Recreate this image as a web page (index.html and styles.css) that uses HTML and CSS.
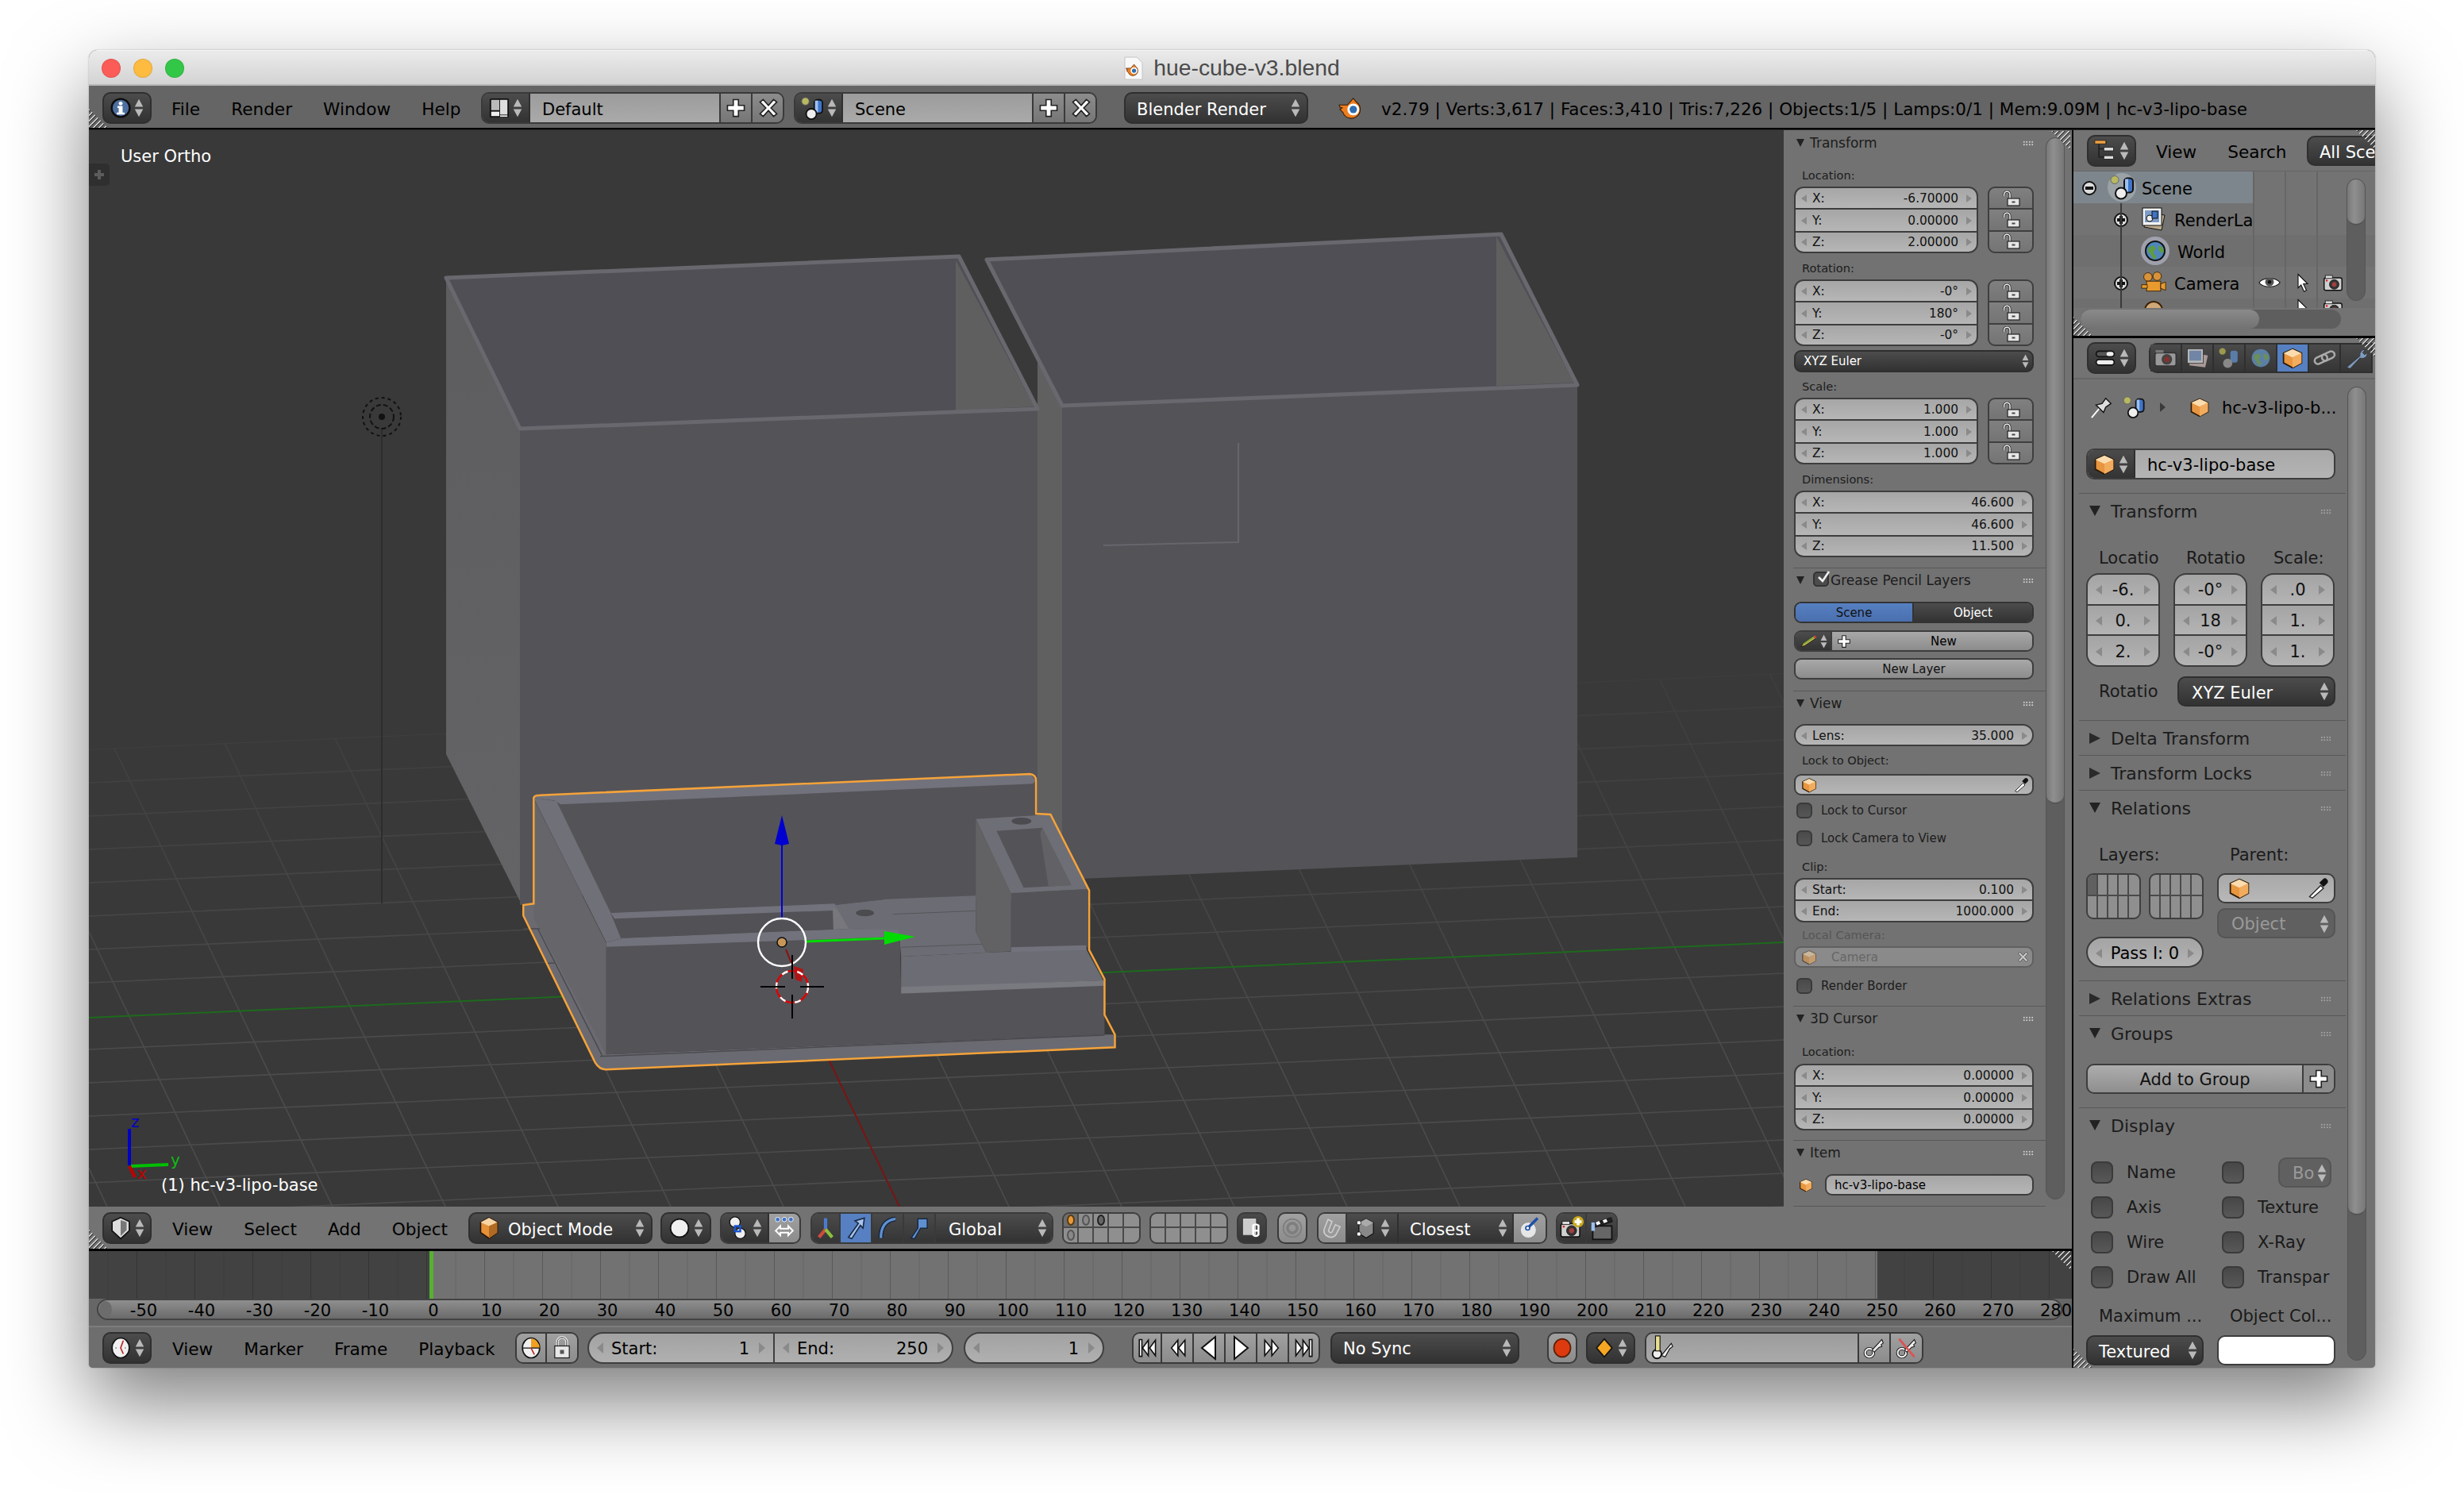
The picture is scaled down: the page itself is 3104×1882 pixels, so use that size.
FILE: index.html
```html
<!DOCTYPE html>
<html lang="en">
<head>
<meta charset="utf-8">
<title>hue-cube-v3.blend</title>
<link rel="stylesheet" href="styles.css">
</head>
<body>
<svg class="defs" width="0" height="0">
  <defs>
    <symbol id="ud" viewBox="0 0 16 32"><path d="M8 1l7 13H1zM8 31l7-13H1z" fill="#b9b9b9"/></symbol>
    <symbol id="info" viewBox="0 0 32 32"><circle cx="16" cy="16" r="14" fill="#4d6f9f" stroke="#0c0c0c" stroke-width="3"/><circle cx="16" cy="9" r="3" fill="#fff"/><path d="M11 13h8v10h3v3H10v-3h3v-7h-2z" fill="#fff"/></symbol>
    <symbol id="layout" viewBox="2 2 28 28"><rect x="3" y="3" width="26" height="26" rx="2" fill="#111"/><rect x="5" y="5" width="11" height="14" fill="#bbb"/><rect x="17" y="5" width="10" height="20" fill="#ddd"/><rect x="5" y="21" width="11" height="6" fill="#eee"/><rect x="17" y="26" width="10" height="2" fill="#eee"/></symbol>
    <symbol id="scene" viewBox="1 0 32 31"><circle cx="8" cy="6" r="5" fill="#b8b860" stroke="#666" stroke-width="1"/><rect x="20" y="4" width="11" height="18" rx="4" fill="#3f74c8" stroke="#111" stroke-width="2"/><rect x="21" y="5" width="4" height="16" fill="#9cc0f0"/><circle cx="16" cy="23" r="7" fill="#eee" stroke="#111" stroke-width="2"/></symbol>
    <symbol id="plus" viewBox="0 0 32 32"><path d="M12 3h8v9h9v8h-9v9h-8v-9H3v-8h9z" fill="#fff" stroke="#222" stroke-width="2"/></symbol>
    <symbol id="cross" viewBox="0 0 32 32"><path d="M8 3l8 9 8-9 5 4-9 9 9 9-5 4-8-9-8 9-5-4 9-9-9-9z" fill="#fff" stroke="#222" stroke-width="2"/></symbol>
    <symbol id="logo" viewBox="0 0 34 30"><path d="M1 11h11L20 2l4 5a12 12 0 1 1-18 14l-4-4 3-2-3-1z" fill="#ed7d1e" stroke="#3b1d05" stroke-width="1.2"/><circle cx="20" cy="17" r="8" fill="#fff"/><circle cx="20" cy="17" r="5" fill="#2f6db0"/></symbol>
    <symbol id="cube" viewBox="0 0 32 32"><path d="M16 3l13 6v14l-13 7-13-7V9z" fill="#e8963f" stroke="#2a1a08" stroke-width="2"/><path d="M16 3l13 6-13 6L3 9z" fill="#fbdcae"/><path d="M16 15l13-6v14l-13 7z" fill="#f2ac5e"/></symbol>
    <symbol id="lock" viewBox="0 0 22 20"><path d="M9 10V5a3.700 3.700 0 0 0-7.400 0V7.500" fill="none" stroke="#222" stroke-width="3"/><path d="M9 10V5a3.700 3.700 0 0 0-7.400 0V7.500" fill="none" stroke="#f4f4f4" stroke-width="1.500"/><rect x="6" y="10" width="15" height="9" fill="#e6e6e6" stroke="#222" stroke-width="1.200"/><rect x="11.500" y="13.500" width="4" height="2" fill="#444"/></symbol>
    <symbol id="dropper" viewBox="0 0 32 32"><path d="M4 28l16-16 4 4L8 30z" fill="#fff" stroke="#222" stroke-width="1.5"/><path d="M18 8l6 6 5-5a4 4 0 0 0-6-6z" fill="#111"/></symbol>
    <symbol id="pencil" viewBox="0 0 48 32"><path d="M4 29l5-8 26-18 5 6-27 18z" fill="#c6b04a" stroke="#111" stroke-width="1.5"/><path d="M9 21l26-18 3 3-27 18z" fill="#79a83c"/><path d="M35 3l5 6 3-3-4-5z" fill="#d7423a"/></symbol>
    <symbol id="axes" viewBox="0 0 32 36"><path d="M16 20V3" stroke="#4b7bd0" stroke-width="5"/><path d="M16 20L6 32" stroke="#d14b3e" stroke-width="5"/><path d="M16 20l10 12" stroke="#8bc23c" stroke-width="5"/></symbol>
    <symbol id="arrowup" viewBox="0 0 32 36"><path d="M5 32L20 11l-5-4 14-4-2 15-4-4L10 34z" fill="#a6c6f0" stroke="#1a2a44" stroke-width="2"/></symbol>
    <symbol id="curve" viewBox="0 0 32 36"><path d="M6 33C6 15 14 6 28 4" fill="none" stroke="#12223c" stroke-width="7"/><path d="M6 33C6 15 14 6 28 4" fill="none" stroke="#5f8fd0" stroke-width="4"/></symbol>
    <symbol id="scale" viewBox="0 0 32 36"><path d="M4 33l10-15V4h14v14H18L9 34z" fill="#5f8fd0" stroke="#12223c" stroke-width="1.5"/></symbol>
    <symbol id="shield" viewBox="0 0 32 36"><path d="M16 2l13 6v14l-13 12-13-12V8z" fill="#ddd" stroke="#111" stroke-width="2"/><path d="M16 6l9 3v12l-9 9z" fill="#777"/></symbol>
    <symbol id="modecube" viewBox="0 0 32 36"><path d="M16 2l13 7v16l-13 9-13-9V9z" fill="#e69038" stroke="#241505" stroke-width="2"/><path d="M16 2l13 7-13 6L3 9z" fill="#f7d5a4"/><path d="M16 15l13-6v16l-13 9z" fill="#b06a24"/></symbol>
    <symbol id="ball" viewBox="0 0 32 32"><circle cx="16" cy="16" r="13" fill="#efefef" stroke="#111" stroke-width="2"/></symbol>
    <symbol id="pivot" viewBox="0 0 32 36"><circle cx="11" cy="9" r="8" fill="#eee" stroke="#111" stroke-width="1.5"/><circle cx="19" cy="26" r="8" fill="#eee" stroke="#111" stroke-width="1.5"/><rect x="11" y="15" width="8" height="8" fill="none" stroke="#1a55d0" stroke-width="3"/></symbol>
    <symbol id="manip" viewBox="0 0 32 36"><circle cx="6" cy="5" r="3.5" fill="#3f74c8" stroke="#fff"/><circle cx="16" cy="5" r="3.5" fill="#3f74c8" stroke="#fff"/><circle cx="26" cy="5" r="3.5" fill="#3f74c8" stroke="#fff"/><path d="M3 22l7-7v4h12v-4l7 7-7 7v-4H10v4z" fill="none" stroke="#fff" stroke-width="2.4"/></symbol>
    <symbol id="link" viewBox="0 0 32 36"><rect x="2" y="3" width="21" height="26" fill="#ccc" stroke="#333"/><path d="M18 14a6 6 0 0 1 8 0v8h-8zM18 22h8v6a5 5 0 0 1-8 0z" fill="none" stroke="#fff" stroke-width="3"/></symbol>
    <symbol id="prop" viewBox="0 0 32 32"><circle cx="16" cy="16" r="13" fill="none" stroke="#7e7e7e" stroke-width="2"/><circle cx="16" cy="16" r="7" fill="none" stroke="#7e7e7e" stroke-width="4"/></symbol>
    <symbol id="magnet" viewBox="0 0 32 36"><path d="M10 5L4 20c-2 10 12 16 18 8l6-12-7-3-5 11c-2 2-6 0-5-3l5-13z" fill="#999" stroke="#ccc" stroke-width="2"/></symbol>
    <symbol id="snapcube" viewBox="0 0 32 36"><path d="M16 4l11 6v16l-11 7-11-7V10z" fill="#888" stroke="#111" stroke-width="1.5"/><path d="M16 4l11 6-11 6-11-6z" fill="#aaa"/><rect x="2" y="7" width="6" height="6" rx="2" fill="#fff" stroke="#111"/><rect x="2" y="24" width="6" height="6" rx="2" fill="#fff" stroke="#111"/></symbol>
    <symbol id="snapball" viewBox="0 0 32 36"><circle cx="14" cy="21" r="12" fill="#e6e6e6" stroke="#888"/><path d="M13 18L28 3" stroke="#1b4ea8" stroke-width="4"/><circle cx="13" cy="18" r="3" fill="#fff" stroke="#1b4ea8" stroke-width="2"/></symbol>
    <symbol id="camera" viewBox="0 0 36 32"><rect x="3" y="8" width="30" height="21" rx="3" fill="#cfcfcf" stroke="#111" stroke-width="2"/><rect x="5" y="4" width="12" height="5" fill="#ddd" stroke="#111"/><circle cx="20" cy="19" r="8" fill="#333" stroke="#111"/><circle cx="20" cy="19" r="4" fill="#a04040"/><rect x="6" y="11" width="3" height="3" fill="#d22"/></symbol>
    <symbol id="camadd" viewBox="0 0 36 36"><use href="#camera" y="4" width="32" height="30"/><circle cx="27" cy="9" r="8" fill="#c9a818"/><path d="M25 4h4v3h3v4h-3v3h-4v-3h-3V7h3z" fill="#fff"/></symbol>
    <symbol id="clap" viewBox="0 0 36 36"><rect x="5" y="15" width="27" height="19" fill="#666" stroke="#111" stroke-width="2"/><path d="M3 12l28-9 2 6-28 9z" fill="#222" stroke="#111"/><path d="M9 10l5-2 2 4-5 2zM19 7l5-2 2 4-5 2z" fill="#fff"/><rect x="3" y="10" width="5" height="12" fill="#9cc0f0"/></symbol>
    <symbol id="clock" viewBox="0 0 32 36"><ellipse cx="16" cy="18" rx="13" ry="15" fill="#f0f0f0" stroke="#111" stroke-width="2"/><path d="M20 7l-4 11 4 9" stroke="#b22" stroke-width="2" fill="none"/><path d="M8 18h2M22 18h2" stroke="#333"/></symbol>
    <symbol id="clockor" viewBox="0 0 32 36"><ellipse cx="16" cy="18" rx="13" ry="15" fill="#f0f0f0" stroke="#111" stroke-width="2"/><path d="M16 18V4a13 15 0 0 1 13 14z" fill="#f0a020"/><path d="M3 18h26" stroke="#111" stroke-width="1.5"/><path d="M16 18l5 10" stroke="#b22" stroke-width="2"/></symbol>
    <symbol id="padlock" viewBox="0 0 32 36"><path d="M9 15V9a7 7 0 0 1 14 0v6" fill="none" stroke="#eee" stroke-width="4"/><path d="M9 15V9a7 7 0 0 1 14 0v6" fill="none" stroke="#222" stroke-width="1"/><rect x="5" y="15" width="22" height="18" fill="#e8e8e8" stroke="#222" stroke-width="1.5"/><rect x="13" y="21" width="6" height="6" fill="#555"/></symbol>
    <symbol id="first" viewBox="0 0 30 32"><path d="M3 3h4v26H3zM17 4v24L8 16zM28 4v24L19 16z" fill="#fff" stroke="#111" stroke-width="2"/></symbol>
    <symbol id="prev" viewBox="0 0 30 32"><path d="M16 4v24L6 16zM27 4v24L17 16z" fill="#fff" stroke="#111" stroke-width="2"/></symbol>
    <symbol id="back" viewBox="0 0 30 32"><path d="M23 2v28L6 16z" fill="#fff" stroke="#111" stroke-width="2"/></symbol>
    <symbol id="play" viewBox="0 0 30 32"><path d="M7 2v28l17-14z" fill="#fff" stroke="#111" stroke-width="2"/></symbol>
    <symbol id="next" viewBox="0 0 30 32"><path d="M3 4v24l10-12zM14 4v24l10-12z" fill="#fff" stroke="#111" stroke-width="2"/></symbol>
    <symbol id="last" viewBox="0 0 30 32"><path d="M2 4v24l9-12zM13 4v24l9-12zM23 3h4v26h-4z" fill="#fff" stroke="#111" stroke-width="2"/></symbol>
    <symbol id="rec" viewBox="0 0 32 32"><ellipse cx="16" cy="16" rx="12" ry="13" fill="#dd3a10" stroke="#5a2008" stroke-width="2"/></symbol>
    <symbol id="diamond" viewBox="0 0 32 32"><path d="M16 2l12 14-12 14L4 16z" fill="#f5a623" stroke="#111" stroke-width="2"/></symbol>
    <symbol id="key" viewBox="0 0 32 32"><circle cx="9" cy="23" r="6" fill="none" stroke="#111" stroke-width="4.5"/><circle cx="9" cy="23" r="6" fill="none" stroke="#eee" stroke-width="2.4"/><path d="M13 19L27 4l2 5-3 2 1 3-4 1-7 7z" fill="#eee" stroke="#111" stroke-width="1.2"/></symbol>
    <symbol id="keyy" viewBox="0 0 32 36"><circle cx="9" cy="26" r="6" fill="#eee" stroke="#111" stroke-width="2"/><rect x="7" y="2" width="6" height="20" fill="#e8df90" stroke="#111" stroke-width="1.2"/><path d="M15 28L28 12l2 4-4 3-6 11z" fill="#eee" stroke="#111" stroke-width="1.2"/></symbol>
    <symbol id="keyx" viewBox="0 0 32 32"><use href="#key" width="32" height="32"/><path d="M5 3l22 26" stroke="#e05050" stroke-width="3"/></symbol>
    <symbol id="tree" viewBox="0 0 32 32"><path d="M4 4h14M7 5v20M7 13h8M7 25h8" stroke="#222" stroke-width="2"/><rect x="1" y="1" width="16" height="5" fill="#f0a040" stroke="#222"/><rect x="14" y="11" width="14" height="5" fill="#ddd" stroke="#222"/><rect x="14" y="23" width="14" height="5" fill="#ddd" stroke="#222"/></symbol>
    <symbol id="propsel" viewBox="0 0 32 32"><rect x="3" y="6" width="26" height="8" rx="4" fill="#555" stroke="#111" stroke-width="2"/><rect x="18" y="7" width="10" height="6" rx="3" fill="#eee"/><rect x="3" y="18" width="26" height="8" rx="4" fill="#eee" stroke="#111" stroke-width="2"/></symbol>
    <symbol id="renderl" viewBox="0 0 32 32"><path d="M8 8l22 3-4 19-22-4z" fill="#b9a98a" stroke="#111"/><rect x="2" y="2" width="24" height="22" fill="#f2f2f2" stroke="#111"/><rect x="5" y="5" width="18" height="15" fill="#7e9cc8"/><circle cx="11" cy="15" r="4" fill="#eee" stroke="#111"/><rect x="14" y="6" width="7" height="9" fill="#3f74c8" stroke="#111"/></symbol>
    <symbol id="world" viewBox="0 0 32 32"><circle cx="16" cy="16" r="12" fill="#4f86bd" stroke="#111" stroke-width="2"/><path d="M7 12l7-3 3 4-3 5 4 6-4 3-4-7-3-3zM20 9l6 3 1 5-4 2-3-4z" fill="#5f9a48"/></symbol>
    <symbol id="camobj" viewBox="0 0 36 32"><circle cx="10" cy="8" r="6" fill="#d8923a" stroke="#3a2205"/><circle cx="23" cy="7" r="6" fill="#d8923a" stroke="#3a2205"/><rect x="8" y="14" width="20" height="14" fill="#e89a2e" stroke="#3a2205"/><path d="M28 18l7-3v12l-7-3zM1 19h8v5H1z" fill="#e89a2e" stroke="#3a2205"/></symbol>
    <symbol id="lamp" viewBox="0 0 32 32"><circle cx="16" cy="14" r="11" fill="#cfa878" stroke="#3a2205" stroke-width="2"/></symbol>
    <symbol id="eye" viewBox="0 0 36 20"><path d="M1 10C8 1 28 1 35 10 28 19 8 19 1 10z" fill="#fff" stroke="#111" stroke-width="1.5"/><circle cx="18" cy="9" r="7" fill="#555"/><circle cx="18" cy="9" r="3" fill="#111"/></symbol>
    <symbol id="ptr" viewBox="0 0 20 32"><path d="M2 2l16 16h-7l5 11-4 2-5-11-5 5z" fill="#fff" stroke="#111" stroke-width="1.5"/></symbol>
    <symbol id="pin" viewBox="0 0 32 32"><path d="M2 30l11-13" stroke="#fff" stroke-width="2"/><path d="M8 13l10 10 3-7 7-5-7-7-5 7z" fill="#ddd" stroke="#111" stroke-width="1.5"/></symbol>
    <symbol id="tcam" viewBox="0 0 36 32"><rect x="2" y="8" width="32" height="20" rx="3" fill="#999" stroke="#333" stroke-width="2"/><circle cx="20" cy="18" r="8" fill="#444"/><circle cx="20" cy="18" r="4" fill="#863030"/><rect x="3" y="4" width="12" height="4" fill="#777"/></symbol>
    <symbol id="tlink" viewBox="0 0 36 32"><rect x="3" y="13" width="20" height="10" rx="5" transform="rotate(-25 13 18)" fill="none" stroke="#aaa" stroke-width="3"/><rect x="14" y="8" width="20" height="10" rx="5" transform="rotate(-25 24 13)" fill="none" stroke="#aaa" stroke-width="3"/></symbol>
    <symbol id="twrench" viewBox="0 0 36 32"><path d="M4 30L24 13a8 8 0 0 1 8-10l-4 5 3 3 4-3a8 8 0 0 1-11 8L9 32z" fill="#7e9cc0" stroke="#333"/></symbol>
    <symbol id="tdim" viewBox="0 0 36 32"><path d="M8 8l26 4-4 18-24-3z" fill="#a99"/><rect x="3" y="2" width="24" height="22" fill="#b8b8b8" stroke="#333"/><rect x="6" y="5" width="18" height="15" fill="#7186a6"/></symbol>
    <symbol id="tscene" viewBox="0 0 36 32"><circle cx="8" cy="6" r="5" fill="#9a9a50"/><rect x="20" y="5" width="11" height="18" rx="4" fill="#5a7ca8"/><circle cx="16" cy="24" r="7" fill="#888"/></symbol>
    <symbol id="tworld" viewBox="0 0 32 32"><circle cx="16" cy="16" r="13" fill="#5b7fa4"/><path d="M6 12l7-3 3 4-3 5 4 6-4 3-4-7-3-3zM20 9l6 3 1 5-4 2-3-4z" fill="#6b8f5a"/></symbol>
  </defs>
</svg>

<div class="window">
  <header class="titlebar">
    <span class="lights"><i class="l red"></i><i class="l yellow"></i><i class="l green"></i></span>
    <svg class="docicon" viewBox="0 0 24 30"><path d="M1 1h15l7 7v21H1z" fill="#f8f8f8" stroke="#c4c4c4"/><use href="#logo" x="2" y="9" width="18" height="16"/></svg>
    <span class="title">hue-cube-v3.blend</span>
  </header>

  <div class="bar topbar">
    <i class="hatch hatch-bl"></i>
    <button class="dk sel60 first-btn"><svg class="i26"><use href="#info"/></svg><svg class="ud"><use href="#ud"/></svg></button>
    <nav class="menu menu-top"><span>File</span><span>Render</span><span>Window</span><span>Help</span></nav>
    <div class="joined w382">
      <span class="dk sel60 seg"><svg class="i26"><use href="#layout"/></svg><svg class="ud"><use href="#ud"/></svg></span>
      <span class="fld f240">Default</span>
      <span class="ico w40"><svg class="i26"><use href="#plus"/></svg></span>
      <span class="ico w40"><svg class="i26"><use href="#cross"/></svg></span>
    </div>
    <div class="joined w382 ml12">
      <span class="dk sel60 seg"><svg class="i30s"><use href="#scene"/></svg><svg class="ud"><use href="#ud"/></svg></span>
      <span class="fld f240">Scene</span>
      <span class="ico w40"><svg class="i26"><use href="#plus"/></svg></span>
      <span class="ico w40"><svg class="i26"><use href="#cross"/></svg></span>
    </div>
    <button class="dk drop w232 ml34"><span class="tx">Blender Render</span><svg class="ud"><use href="#ud"/></svg></button>
    <svg class="logo"><use href="#logo"/></svg>
    <span class="stats">v2.79 | Verts:3,617 | Faces:3,410 | Tris:7,226 | Objects:1/5 | Lamps:0/1 | Mem:9.09M | hc-v3-lipo-base</span>
  </div>
  <div class="rule"></div>

  <div class="main">
    <div class="leftcol">
      <div class="top3d">
        <section class="viewport">
          <svg class="scene" viewBox="112 164 2135 1356" preserveAspectRatio="none">
            <defs>
              <clipPath id="floor"><path d="M112 944L2248 848V1520H112z"/></clipPath>
              <linearGradient id="side" x1="0" x2="0" y1="0" y2="1"><stop offset="0" stop-color="#5d5d5f"/><stop offset="1" stop-color="#646466"/></linearGradient>
              <linearGradient id="gridfade" gradientUnits="userSpaceOnUse" x1="0" x2="0" y1="880" y2="1320"><stop offset="0" stop-color="#3e3e3e"/><stop offset="1" stop-color="#4b4b4b"/></linearGradient>
            </defs>
            <g clip-path="url(#floor)" stroke="url(#gridfade)" stroke-width="1.6" fill="none">
              <path d="M-322 560L135 1520M-180 560L277 1520M-38 560L419 1520M104 560L561 1520M246 560L703 1520M388 560L845 1520M530 560L987 1520M814 560L1271 1520M956 560L1413 1520M1098 560L1555 1520M1240 560L1697 1520M1382 560L1839 1520M1524 560L1981 1520M1666 560L2123 1520M1808 560L2265 1520M1950 560L2407 1520M2092 560L2549 1520"/>
              <path d="M112 944L2248 848M112 986L2248 890M112 1028L2248 932M112 1070L2248 974M112 1112L2248 1016M112 1154L2248 1058M112 1196L2248 1100M112 1238L2248 1142M112 1322L2248 1226M112 1364L2248 1268M112 1406L2248 1310M112 1448L2248 1352M112 1490L2248 1394M112 1532L2248 1436M112 1574L2248 1478M112 1616L2248 1520"/>
              <path d="M112 1282L2248 1187" stroke="#1d6a1d" stroke-width="2"/>
              <path d="M1036 1318L1133 1520" stroke="#7a1414" stroke-width="2"/>
            </g>
            <path d="M481 540V1138" stroke="#2d2d2d" stroke-width="2"/>
            <circle cx="481" cy="525" r="24" fill="none" stroke="#111" stroke-width="2" stroke-dasharray="4 4"/>
            <circle cx="481" cy="525" r="15" fill="none" stroke="#111" stroke-width="2" stroke-dasharray="6 3"/>
            <circle cx="481" cy="525" r="4" fill="#111"/>

            <!-- right cube -->
            <path d="M1243 327L1338 511V1110L1307 1040V400z" fill="#606061"/>
            <path d="M1338 511L1987 485V1080L1338 1108z" fill="#545358"/>
            <path d="M1243 327L1891 295L1987 485L1338 511z" fill="#504f55"/>
            <path d="M1885 298L1983 482L1885 486z" fill="#5f5f60"/>
            <path d="M1243 327L1891 295L1987 485L1338 511z" fill="none" stroke="#68686e" stroke-width="5" stroke-linejoin="round"/>
            <path d="M1560 558V683L1390 687" fill="none" stroke="#66666c" stroke-width="2"/>

            <!-- left cube -->
            <path d="M562 350L655 540V1135L562 950z" fill="url(#side)"/>
            <path d="M655 540L1307 515V1040L655 1140z" fill="#545358"/>
            <path d="M562 350L1208 323L1307 515L655 540z" fill="#504f55"/>
            <path d="M1204 328L1303 512L1204 517z" fill="#5f5f60"/>
            <path d="M562 350L1208 323L1307 515L655 540z" fill="none" stroke="#68686e" stroke-width="5" stroke-linejoin="round"/>

            <!-- base object, coordinates taken from a 1.912 x 3 crop of the scene -->
            <g transform="translate(620 950) scale(.523 .3333)">
              <path d="M75 570L100 565L275 1135L1475 1060L1500 1060V1108L260 1192L248 1165L75 610z" fill="#6a6a70"/>
              <path d="M248 1165L260 1145L1500 1075V1108L260 1192z" fill="#6a6a72"/>
              <path d="M100 165L165 190L1310 100V560L950 548L825 570L285 600z" fill="#545358"/>
              <path d="M100 170L275 715V1135L100 620z" fill="#66666a"/>
              <path d="M100 165L115 155L1295 75L1310 100L1302 112L165 190L150 175z" fill="#72727c"/>
              <path d="M100 165L155 178L315 695L275 712z" fill="#707078"/>
              <path d="M285 600L825 565L860 660L310 695z" fill="#525156"/>
              <path d="M285 600L825 565L835 590L295 622z" fill="#72727c"/>
              <path d="M820 580L835 590L860 660L822 663z" fill="#77777c"/>
              <path d="M825 570L950 548L985 670L860 660z" fill="#6c6c74"/>
              <ellipse cx="898" cy="600" rx="22" ry="13" fill="#4b4b50"/>
              <path d="M945 548L1165 535V670L1190 750L985 765L980 670z" fill="#6c6c74"/>
              <path d="M965 605L1165 592M985 730L1180 718" stroke="#55555a" stroke-width="1" vector-effect="non-scaling-stroke"/>
              <path d="M275 712L315 695L860 660L980 665L982 692L275 732z" fill="#72727c"/>
              <path d="M275 728L982 690L985 905L1475 862V1060L275 1135z" fill="#545358"/>
              <path d="M985 765L1190 750L1430 735L1472 855L985 885z" fill="#6c6c74"/>
              <path d="M985 880L1472 855L1475 875L985 905z" fill="#797980"/>
              <path d="M1250 525L1435 510V730L1250 745z" fill="#545358"/>
              <path d="M1250 730L1430 722L1432 740L1250 748z" fill="#72727c"/>
              <path d="M1165 250L1250 520V745L1190 750L1165 670z" fill="#626264"/>
              <path d="M1165 245L1345 228L1435 510L1250 525z" fill="#6e6e76"/>
              <path d="M1215 290L1325 278L1395 495L1280 505z" fill="#545358"/>
              <path d="M1325 278L1395 495L1340 500L1320 300z" fill="#626266"/>
              <ellipse cx="1275" cy="253" rx="24" ry="13" fill="#4b4b50"/>
              <path d="M260 1142L1475 1062M110 660L265 1140M130 790L150 790M75 660L115 660" fill="none" stroke="#4a4a50" stroke-width="1.5" vector-effect="non-scaling-stroke"/>
              <path vector-effect="non-scaling-stroke" d="M100 165Q102 155 115 155L1295 75Q1310 78 1310 100V225L1345 228L1438 515V740L1475 850V985L1500 1060V1108L275 1192Q258 1192 248 1165L75 610V570L100 565z" fill="none" stroke="#f5a33a" stroke-width="2.5"/>
            </g>

            <!-- gizmo -->
            <path d="M985 1157V1064" stroke="#0000dc" stroke-width="2"/>
            <path d="M985 1027L994 1063L985 1065L976 1063z" fill="#0000d0"/>
            <path d="M1016 1186L1114 1182" stroke="#00dc00" stroke-width="3"/>
            <path d="M1114 1173L1153 1180L1114 1190z" fill="#00dc00"/>
            <circle cx="985" cy="1187" r="30" fill="none" stroke="#fff" stroke-width="2.4"/>
            <circle cx="985" cy="1187" r="6" fill="#c8965a" stroke="#111" stroke-width="1.5"/>
            <path d="M990 1196L997 1213" stroke="#8a1414" stroke-width="2"/>
            <path d="M1000 1217L1012 1221L1010 1237L1002 1234z" fill="#b01515"/>
            <circle cx="998" cy="1243" r="20" fill="none" stroke="#e00000" stroke-width="2.4"/>
            <circle cx="998" cy="1243" r="20" fill="none" stroke="#fff" stroke-width="2.4" stroke-dasharray="8 12"/>
            <path d="M958 1243H989M1008 1243H1038M998 1203V1233M998 1253V1283" stroke="#000" stroke-width="2"/>

            <!-- mini axes -->
            <path d="M163 1422V1468" stroke="#0000c8" stroke-width="4"/>
            <path d="M165 1469L212 1467" stroke="#00c000" stroke-width="4"/>
            <path d="M163 1469L170 1483" stroke="#c00000" stroke-width="4"/>
          </svg>
          <span class="vp-tab"><b></b></span>
          <span class="vp-text vp-name">User Ortho</span>
          <span class="vp-axis ax-z">z</span>
          <span class="vp-axis ax-y">y</span>
          <span class="vp-axis ax-x">x</span>
          <span class="vp-text vp-obj">(1) hc-v3-lipo-base</span>
        </section>

        <aside class="npanel">
          <i class="hatch hatch-tr"></i>
          <div class="scroll scroll-n"><b></b></div>

          <div class="np-head m1"><i class="tri"></i>Transform<em class="dots"></em></div>
          <div class="lab mt12">Location:</div>
          <div class="fl-row">
            <div class="grp">
              <div class="num"><span>X:</span><span>-6.70000</span></div>
              <div class="num"><span>Y:</span><span>0.00000</span></div>
              <div class="num"><span>Z:</span><span>2.00000</span></div>
            </div>
            <div class="locks"><span><svg><use href="#lock"/></svg></span><span><svg><use href="#lock"/></svg></span><span><svg><use href="#lock"/></svg></span></div>
          </div>
          <div class="lab mt5">Rotation:</div>
          <div class="fl-row">
            <div class="grp">
              <div class="num"><span>X:</span><span>-0°</span></div>
              <div class="num"><span>Y:</span><span>180°</span></div>
              <div class="num"><span>Z:</span><span>-0°</span></div>
            </div>
            <div class="locks"><span><svg><use href="#lock"/></svg></span><span><svg><use href="#lock"/></svg></span><span><svg><use href="#lock"/></svg></span></div>
          </div>
          <button class="dk drop-s mt5">XYZ Euler<svg class="ud-s"><use href="#ud"/></svg></button>
          <div class="lab mt4">Scale:</div>
          <div class="fl-row">
            <div class="grp">
              <div class="num"><span>X:</span><span>1.000</span></div>
              <div class="num"><span>Y:</span><span>1.000</span></div>
              <div class="num"><span>Z:</span><span>1.000</span></div>
            </div>
            <div class="locks"><span><svg><use href="#lock"/></svg></span><span><svg><use href="#lock"/></svg></span><span><svg><use href="#lock"/></svg></span></div>
          </div>
          <div class="lab mt5">Dimensions:</div>
          <div class="grp wide">
            <div class="num"><span>X:</span><span>46.600</span></div>
            <div class="num"><span>Y:</span><span>46.600</span></div>
            <div class="num"><span>Z:</span><span>11.500</span></div>
          </div>

          <div class="np-sep sep-13"></div>
          <div class="np-head"><i class="tri"></i><i class="chk"><svg viewBox="0 0 20 20"><path d="M4 9l5 5 8-12" fill="none" stroke="#eee" stroke-width="2.6"/></svg></i>Grease Pencil Layers<em class="dots"></em></div>
          <div class="tabs2 mt12"><span class="on">Scene</span><span>Object</span></div>
          <div class="newrow mt9"><span class="dk pen"><svg class="i-pen"><use href="#pencil"/></svg><svg class="ud-s"><use href="#ud"/></svg></span><span class="newbtn"><svg class="i-plus"><use href="#plus"/></svg><b>New</b></span></div>
          <div class="btn mt8">New Layer</div>

          <div class="np-sep sep-14"></div>
          <div class="np-head"><i class="tri"></i>View<em class="dots"></em></div>
          <div class="grp wide one mt11"><div class="num"><span>Lens:</span><span>35.000</span></div></div>
          <div class="lab mt4">Lock to Object:</div>
          <div class="objf mt3"><svg class="i-cube"><use href="#cube"/></svg><svg class="i-drop"><use href="#dropper"/></svg></div>
          <div class="chkrow mt5"><i class="box"></i>Lock to Cursor</div>
          <div class="chkrow mt7"><i class="box"></i>Lock Camera to View</div>
          <div class="lab mt8">Clip:</div>
          <div class="grp wide two">
            <div class="num"><span>Start:</span><span>0.100</span></div>
            <div class="num"><span>End:</span><span>1000.000</span></div>
          </div>
          <div class="lab dim mt2">Local Camera:</div>
          <div class="objf off"><svg class="i-cube"><use href="#cube"/></svg><span>Camera</span><svg class="i-x"><use href="#cross"/></svg></div>
          <div class="chkrow mt9"><i class="box"></i>Render Border</div>

          <div class="np-sep sep-11"></div>
          <div class="np-head"><i class="tri"></i>3D Cursor<em class="dots"></em></div>
          <div class="lab mt13">Location:</div>
          <div class="grp wide mt1">
            <div class="num"><span>X:</span><span>0.00000</span></div>
            <div class="num"><span>Y:</span><span>0.00000</span></div>
            <div class="num"><span>Z:</span><span>0.00000</span></div>
          </div>

          <div class="np-sep sep-12"></div>
          <div class="np-head"><i class="tri"></i>Item<em class="dots"></em></div>
          <div class="itemrow mt12"><svg class="i-cube"><use href="#cube"/></svg><span class="itemf">hc-v3-lipo-base</span></div>
          <div class="np-sep sep-13"></div>
        </aside>
      </div>

      <div class="bar header3d">
        <i class="hatch hatch-bl"></i>
        <button class="dk sel60 first-btn"><svg class="i28"><use href="#shield"/></svg><svg class="ud"><use href="#ud"/></svg></button>
        <nav class="menu menu-3d"><span>View</span><span>Select</span><span>Add</span><span>Object</span></nav>
        <button class="dk drop w232"><svg class="i-mode"><use href="#modecube"/></svg><span class="grow tx">Object Mode</span><svg class="ud"><use href="#ud"/></svg></button>
        <button class="dk sel60 w64 ml10"><svg class="i28"><use href="#ball"/></svg><svg class="ud"><use href="#ud"/></svg></button>
        <div class="joined ml11">
          <span class="dk sel60 seg"><svg class="i28"><use href="#pivot"/></svg><svg class="ud"><use href="#ud"/></svg></span>
          <span class="ico lt w38"><svg class="i28"><use href="#manip"/></svg></span>
        </div>
        <div class="joined ml12">
          <span class="ico dkk w36"><svg class="i28"><use href="#axes"/></svg></span>
          <span class="ico blue w40"><svg class="i28"><use href="#arrowup"/></svg></span>
          <span class="ico dkk w40"><svg class="i28"><use href="#curve"/></svg></span>
          <span class="ico dkk w40"><svg class="i28"><use href="#scale"/></svg></span>
          <span class="dk sel-gl"><span class="tx">Global</span><svg class="ud"><use href="#ud"/></svg></span>
        </div>
        <div class="layers wl ml11"><i class="a"><u class="o"></u></i><i><u></u></i><i><u class="k"></u></i><i></i><i></i><i><u></u></i><i></i><i></i><i></i><i></i></div>
        <div class="layers wl ml11"><i></i><i></i><i></i><i></i><i></i><i></i><i></i><i></i><i></i><i></i></div>
        <button class="ico dkk single ml11"><svg class="i28"><use href="#link"/></svg></button>
        <button class="ico lt single ml13"><svg class="i28"><use href="#prop"/></svg></button>
        <div class="joined ml12">
          <span class="ico lt w36"><svg class="i28"><use href="#magnet"/></svg></span>
          <span class="dk sel60 seg w65"><svg class="i28"><use href="#snapcube"/></svg><svg class="ud"><use href="#ud"/></svg></span>
          <span class="dk sel-cl"><span class="tx">Closest</span><svg class="ud"><use href="#ud"/></svg></span>
          <span class="ico lt w40"><svg class="i28"><use href="#snapball"/></svg></span>
        </div>
        <div class="joined ml11">
          <span class="ico dkk w37"><svg class="i30"><use href="#camadd"/></svg></span>
          <span class="ico dkk w37"><svg class="i30"><use href="#clap"/></svg></span>
        </div>
      </div>
      <div class="rule"></div>

      <div class="timeline"><i class="playhead"></i><i class="hatch hatch-tr2"></i></div>
      <div class="ruler">
        <span>-50</span><span>-40</span><span>-30</span><span>-20</span><span>-10</span><span>0</span><span>10</span><span>20</span><span>30</span><span>40</span><span>50</span><span>60</span><span>70</span><span>80</span><span>90</span><span>100</span><span>110</span><span>120</span><span>130</span><span>140</span><span>150</span><span>160</span><span>170</span><span>180</span><span>190</span><span>200</span><span>210</span><span>220</span><span>230</span><span>240</span><span>250</span><span>260</span><span>270</span><span>280</span>
      </div>
      <div class="bar timehead">
        <button class="dk sel60 first-btn"><svg class="i28"><use href="#clock"/></svg><svg class="ud"><use href="#ud"/></svg></button>
        <nav class="menu menu-tl"><span>View</span><span>Marker</span><span>Frame</span><span>Playback</span></nav>
        <div class="joined">
          <span class="ico lt w38"><svg class="i28"><use href="#clockor"/></svg></span>
          <span class="ico lt w38"><svg class="i28"><use href="#padlock"/></svg></span>
        </div>
        <div class="frames ml11">
          <span class="fnum w236"><span>Start:</span><span>1</span></span>
          <span class="fnum w225"><span>End:</span><span>250</span></span>
        </div>
        <div class="frames ml13"><span class="fnum w177"><span></span><span>1</span></span></div>
        <div class="joined ml35">
          <span class="ico lt w36"><svg class="i26"><use href="#first"/></svg></span>
          <span class="ico lt w40"><svg class="i26"><use href="#prev"/></svg></span>
          <span class="ico lt w40"><svg class="i32"><use href="#back"/></svg></span>
          <span class="ico lt w40"><svg class="i32"><use href="#play"/></svg></span>
          <span class="ico lt w40"><svg class="i26"><use href="#next"/></svg></span>
          <span class="ico lt w37"><svg class="i26"><use href="#last"/></svg></span>
        </div>
        <button class="dk drop w238 ml13"><span class="tx">No Sync</span><svg class="ud"><use href="#ud"/></svg></button>
        <button class="ico lt single ml35"><svg class="i28"><use href="#rec"/></svg></button>
        <button class="dk sel60 ml11"><svg class="i26"><use href="#diamond"/></svg><svg class="ud"><use href="#ud"/></svg></button>
        <div class="joined ml12">
          <span class="fld keyfld"><svg class="i30"><use href="#keyy"/></svg></span>
          <span class="ico lt w40"><svg class="i28"><use href="#key"/></svg></span>
          <span class="ico lt w39"><svg class="i28"><use href="#keyx"/></svg></span>
        </div>
      </div>
    </div>

    <div class="rightcol">
      <div class="outliner">
        <div class="bar ol-head">
          <button class="dk sel60 first-btn"><svg class="i28"><use href="#tree"/></svg><svg class="ud"><use href="#ud"/></svg></button>
          <nav class="menu menu-ol"><span>View</span><span>Search</span></nav>
          <button class="dk allsc"><span class="tx">All Scenes</span></button>
          <i class="hatch hatch-tr3"></i>
        </div>
        <div class="tree">
          <div class="row sel"><i class="exp ex0 minus"></i><span class="halo h-scene"><svg class="i-tree"><use href="#scene"/></svg></span><span class="nm nm0">Scene</span></div>
          <div class="row"><i class="exp ex1"></i><svg class="i-tree l1"><use href="#renderl"/></svg><span class="nm">RenderLa</span></div>
          <div class="row alt"><span class="halo h-world"><svg class="i-tree"><use href="#world"/></svg></span><span class="nm">World</span></div>
          <div class="row"><i class="exp ex1"></i><svg class="i-tree l1"><use href="#camobj"/></svg><span class="nm">Camera</span><span class="rest"><svg class="r-eye"><use href="#eye"/></svg><svg class="r-ptr"><use href="#ptr"/></svg><svg class="r-cam"><use href="#camera"/></svg></span></div>
          <div class="row partial"><svg class="i-tree l1"><use href="#lamp"/></svg><span class="rest"><svg class="r-ptr r-first"><use href="#ptr"/></svg><svg class="r-cam"><use href="#camera"/></svg></span></div>
          <i class="col c1"></i><i class="col c2"></i><i class="col c3"></i><i class="conn"></i>
        </div>
        <div class="hscroll"><b></b></div>
        <div class="scroll scroll-o"><b></b></div>
        <i class="hatch hatch-bl2"></i>
      </div>
      <div class="rule3"></div>

      <div class="props">
        <i class="hatch hatch-tr3"></i>
        <i class="hatch hatch-bl3"></i>
        <div class="scroll scroll-p"><b></b></div>
        <div class="bar pr-head">
          <button class="dk sel60 first-btn"><svg class="i28"><use href="#propsel"/></svg><svg class="ud"><use href="#ud"/></svg></button>
          <div class="ptabs"><span><svg><use href="#tcam"/></svg></span><span><svg><use href="#tdim"/></svg></span><span><svg><use href="#tscene"/></svg></span><span><svg><use href="#tworld"/></svg></span><span class="on"><svg><use href="#cube"/></svg></span><span><svg><use href="#tlink"/></svg></span><span><svg><use href="#twrench"/></svg></span></div>
        </div>
        <div class="crumbs"><svg class="c-pin"><use href="#pin"/></svg><svg class="c-scene"><use href="#scene"/></svg><i class="c-arrow"></i><svg class="c-cube"><use href="#cube"/></svg><span>hc-v3-lipo-b...</span></div>
        <div class="namefld"><span class="dk sel60 seg"><svg class="i28"><use href="#cube"/></svg><svg class="ud"><use href="#ud"/></svg></span><span class="nmval">hc-v3-lipo-base</span></div>

        <div class="p-sep sp17"></div>
        <div class="p-head"><i class="tri big"></i>Transform<em class="dots"></em></div>
        <div class="tri3 mt23">
          <div class="t3col"><div class="plab">Locatio</div><div class="pgrp"><div class="pnum">-6.</div><div class="pnum">0.</div><div class="pnum">2.</div></div></div>
          <div class="t3col"><div class="plab">Rotatio</div><div class="pgrp"><div class="pnum">-0°</div><div class="pnum">18</div><div class="pnum">-0°</div></div></div>
          <div class="t3col"><div class="plab">Scale:</div><div class="pgrp"><div class="pnum">.0</div><div class="pnum">1.</div><div class="pnum">1.</div></div></div>
        </div>
        <div class="rotrow"><span class="plab">Rotatio</span><button class="dk psel"><span class="tx">XYZ Euler</span><svg class="ud"><use href="#ud"/></svg></button></div>

        <div class="p-sep sp17"></div>
        <div class="p-head"><i class="tri big right"></i>Delta Transform<em class="dots"></em></div>
        <div class="p-sep"></div>
        <div class="p-head"><i class="tri big right"></i>Transform Locks<em class="dots"></em></div>
        <div class="p-sep"></div>
        <div class="p-head"><i class="tri big"></i>Relations<em class="dots"></em></div>
        <div class="rel mt23">
          <div class="relcol">
            <div class="plab">Layers:</div>
            <div class="relgrids"><div class="layers wr"><i class="a2"></i><i></i><i></i><i></i><i></i><i></i><i></i><i></i><i></i><i></i></div><div class="layers wr"><i></i><i></i><i></i><i></i><i></i><i></i><i></i><i></i><i></i><i></i></div></div>
            <div class="pass">Pass I: 0</div>
          </div>
          <div class="relcol rc2">
            <div class="plab">Parent:</div>
            <div class="parent"><svg class="i28"><use href="#cube"/></svg><svg class="i28"><use href="#dropper"/></svg></div>
            <div class="objsel">Object<svg class="ud"><use href="#ud"/></svg></div>
          </div>
        </div>

        <div class="p-sep sp16"></div>
        <div class="p-head"><i class="tri big right"></i>Relations Extras<em class="dots"></em></div>
        <div class="p-sep"></div>
        <div class="p-head"><i class="tri big"></i>Groups<em class="dots"></em></div>
        <div class="addgrp"><span>Add to Group</span><b><svg class="i26"><use href="#plus"/></svg></b></div>

        <div class="p-sep sp17"></div>
        <div class="p-head"><i class="tri big"></i>Display<em class="dots"></em></div>
        <div class="disp">
          <div class="dr"><i class="box2"></i>Name</div><div class="dr"><i class="box2"></i><span class="bo">Bo<svg class="ud"><use href="#ud"/></svg></span></div>
          <div class="dr"><i class="box2"></i>Axis</div><div class="dr"><i class="box2"></i>Texture</div>
          <div class="dr"><i class="box2"></i>Wire</div><div class="dr"><i class="box2"></i>X-Ray</div>
          <div class="dr"><i class="box2"></i>Draw All</div><div class="dr"><i class="box2"></i>Transpar</div>
        </div>
        <div class="maxrow"><div class="plab">Maximum ...</div><div class="plab">Object Col...</div></div>
        <div class="ctlrow"><button class="dk psel2"><span class="tx">Textured</span><svg class="ud"><use href="#ud"/></svg></button><span class="swatch"></span></div>
      </div>
    </div>
  </div>
</div>
</body>
</html>
```

FILE: styles.css
```css
* { box-sizing: border-box; }
html, body { margin: 0; height: 100%; background: #fff; overflow: hidden; }
body { font-family: "DejaVu Sans", sans-serif; font-size: 21px; color: #000; padding: 63px 0 0 112px; }
.defs { position: absolute; }
i, em, u { font-style: normal; text-decoration: none; display: block; }
button { font: inherit; padding: 0; margin: 0; color: inherit; }

.window { width: 2880px; height: 1660px; display: flex; flex-direction: column; border-radius: 11px 11px 5px 5px; background: #666; box-shadow: 0 44px 100px rgba(0,0,0,.5), 0 0 2px rgba(0,0,0,.3); overflow: hidden; }

.titlebar { height: 45px; flex: none; position: relative; display: flex; align-items: center; justify-content: center; background: linear-gradient(#ebebeb, #d3d3d3); border-top: 1px solid #f5f5f5; border-bottom: 2px solid #b8b8b8; font-family: "Liberation Sans", sans-serif; }
.lights { position: absolute; left: 16px; top: 10px; display: flex; gap: 16px; }
.l { width: 24px; height: 24px; border-radius: 50%; border: 1px solid rgba(0,0,0,.1); }
.red { background: #fc5c57; } .yellow { background: #fdbc40; } .green { background: #33c748; }
.docicon { width: 24px; height: 30px; margin-right: 13px; margin-top: 1px; }
.title { font-size: 28.3px; color: #4a4a4a; padding-top: 1px; }

.bar { display: flex; align-items: center; flex: none; position: relative; }
.topbar { height: 53px; background: #656565; padding-top: 3px; }
.header3d { height: 53px; background: #737373; padding-top: 1px; }
.rule { height: 3px; background: #000; flex: none; }
.topbar + .rule { border-bottom: 1px solid #2a2a2a; background: #000; }
.main { flex: 1; display: flex; min-height: 0; }
.leftcol { width: 2498px; flex: none; display: flex; flex-direction: column; border-right: 0; }
.rightcol { width: 382px; flex: none; border-left: 2px solid #000; display: flex; flex-direction: column; }
.top3d { height: 1356px; flex: none; display: flex; }

/* generic widgets */
.dk { background: linear-gradient(#4c4c4c, #323232); color: #fff; border: 2px solid #2f2f2f; border-radius: 10px; display: flex; align-items: center; }
.sel60 { width: 62px; height: 40px; justify-content: center; gap: 4px; flex: none; }
.first-btn { margin-left: 17px; }
.seg { width: 60px; border-radius: 0; border-width: 0 2px 0 0; height: 36px; }
.tx { padding-top: 3px; }
.ud { width: 12px; height: 30px; flex: none; }
.ud-s { width: 9px; height: 18px; flex: none; }
.i26 { width: 26px; height: 26px; } .i28 { width: 28px; height: 30px; } .i30 { width: 32px; height: 34px; } .i32 { width: 30px; height: 34px; } .i30s { width: 30px; height: 29px; }
.menu { display: flex; flex: none; gap: 39px; font-size: 21.6px; padding-top: 3px; }
.menu-top { width: 415px; padding-left: 25px; }
.menu-3d { width: 399px; padding-left: 26px; }
.menu-tl { width: 458px; padding-left: 26px; }
.menu-ol { width: 215px; padding-left: 25px; }
.joined { display: flex; height: 40px; border: 2px solid #3a3a3a; border-radius: 10px; overflow: hidden; flex: none; }
.w382 { width: 382px; }
.fld { background: linear-gradient(#9c9c9c, #aaa); display: flex; align-items: center; padding: 3px 0 0 15px; height: 36px; flex: none; }
.f240 { width: 240px; border-right: 2px solid #3a3a3a; }
.ico { display: flex; align-items: center; justify-content: center; background: linear-gradient(#8c8c8c, #767676); border-right: 2px solid #3a3a3a; height: 36px; flex: none; }
.ico:last-child { border-right: 0; }
.lt { background: linear-gradient(#a0a0a0, #8c8c8c); }
.dkk { background: linear-gradient(#4a4a4a, #353535); }
.blue { background: #5680c2; }
.single { width: 38px; height: 40px; border: 2px solid #3a3a3a; border-radius: 10px; }
.w36 { width: 36px; } .w37 { width: 37px; } .w38 { width: 38px; } .w39 { width: 39px; } .w40 { width: 40px; } .w64 { width: 64px; } .w65 { width: 65px; }
.ml10 { margin-left: 10px; } .ml11 { margin-left: 11px; } .ml12 { margin-left: 12px; } .ml13 { margin-left: 13px; } .ml34 { margin-left: 34px; } .ml35 { margin-left: 35px; }
.mt1 { margin-top: 1px; } .mt2 { margin-top: 2px; } .mt3 { margin-top: 3px; } .mt4 { margin-top: 4px; } .mt5 { margin-top: 5px; } .mt7 { margin-top: 7px; } .mt8 { margin-top: 8px; } .mt9 { margin-top: 9px; } .mt11 { margin-top: 11px; } .mt12 { margin-top: 12px; } .mt13 { margin-top: 13px; } .mt23 { margin-top: 23px; }
.drop { height: 40px; justify-content: space-between; padding: 0 8px 0 14px; flex: none; }
.w232 { width: 232px; } .w238 { width: 238px; }
.logo { width: 32px; height: 28px; margin-left: 38px; flex: none; }
.stats { margin-left: 22px; white-space: nowrap; font-size: 21.5px; padding-top: 3px; }
.grow { flex: 1; text-align: left; padding-left: 11px; }
.i-mode { width: 26px; height: 34px; margin-left: -3px; flex: none; }
.sel-gl { width: 146px; height: 36px; border-radius: 0; border: 0; justify-content: space-between; padding: 0 6px 0 16px; flex: none; }
.sel-cl { width: 145px; height: 36px; border-radius: 0; border: 0; border-right: 2px solid #333; justify-content: space-between; padding: 0 6px 0 14px; flex: none; }
.layers { display: grid; grid-template-columns: repeat(5, 1fr); grid-template-rows: 1fr 1fr; border: 2px solid #3f3f3f; border-radius: 9px; overflow: hidden; flex: none; background: #8f8f8f; }
.layers i { border-right: 2px solid #4a4a4a; border-bottom: 2px solid #4a4a4a; display: flex; align-items: center; justify-content: center; }
.layers i:nth-child(5n) { border-right: 0; }
.layers i:nth-child(n+6) { border-bottom: 0; }
.layers u { width: 10px; height: 14px; border-radius: 50%; background: #888; border: 2px solid #555; }
.layers u.o { background: #e89a3c; border-color: #5a3a12; }
.layers u.k { background: #666; border-color: #222; }
.layers .a { background: #6d6d6d; } .layers .a2 { background: #606060; }
.wl { width: 99px; height: 40px; }
.wr { width: 69px; height: 58px; }

/* hatched corners */
.hatch { position: absolute; width: 24px; height: 24px; background: repeating-linear-gradient(135deg, #d0d0d0 0 1.5px, #454545 1.5px 3px, transparent 3px 5px); z-index: 3; }
.hatch-bl { left: 0; bottom: 0; clip-path: polygon(0 0, 100% 100%, 0 100%); }
.hatch-tr { right: 2px; top: 1px; clip-path: polygon(0 0, 100% 0, 100% 100%); }
.hatch-tr2 { right: 1px; top: 0; clip-path: polygon(0 0, 100% 0, 100% 100%); }
.hatch-tr3 { right: 0; top: 0; clip-path: polygon(0 0, 100% 0, 100% 100%); }
.hatch-bl2 { left: 0; bottom: 0; clip-path: polygon(0 0, 100% 100%, 0 100%); }
.hatch-bl3 { left: 0; bottom: 0; clip-path: polygon(0 0, 100% 100%, 0 100%); }

/* viewport */
.viewport { width: 2135px; flex: none; position: relative; background: #393939; overflow: hidden; }
.scene { position: absolute; inset: 0; width: 100%; height: 100%; }
.vp-tab { position: absolute; left: 0; top: 42px; width: 26px; height: 28px; background: #2f2f2f; border-radius: 0 5px 5px 0; display: flex; align-items: center; justify-content: center; }
.vp-tab b { width: 12px; height: 12px; background: linear-gradient(#5c5c5c,#5c5c5c) center/4px 12px no-repeat, linear-gradient(#5c5c5c,#5c5c5c) center/12px 4px no-repeat; }
.vp-text { position: absolute; color: #fff; white-space: nowrap; line-height: 26px; }
.vp-name { left: 40px; top: 20px; }
.vp-obj { left: 91px; top: 1316px; }
.vp-axis { position: absolute; font-size: 20px; line-height: 20px; }
.ax-z { left: 53px; top: 1239px; color: #0000c8; }
.ax-y { left: 103px; top: 1287px; color: #10bc10; }
.ax-x { left: 61px; top: 1304px; color: #c00000; }

/* n panel */
.npanel { width: 363px; flex: none; background: #727272; position: relative; padding: 0 48px 0 13px; font-size: 15px; overflow: hidden; }
.scroll { position: absolute; background: #5e5e5e; border-radius: 12px; border: 1px solid #555; width: 24px; overflow: hidden; }
.scroll b { display: block; background: linear-gradient(90deg, #787878, #8f8f8f 40%, #777); border-radius: 12px; border-bottom: 2px solid #555; }
.scroll-n { left: 330px; top: 9px; height: 1338px; }
.scroll-n b { height: 839px; }
.scroll-o { left: 344px; top: 61px; height: 154px; }
.scroll-o b { height: 58px; }
.scroll-p { left: 345px; top: 61px; height: 1227px; }
.scroll-p b { height: 1043px; }
.np-head { height: 30px; display: flex; align-items: center; font-size: 17px; color: #1c1c1c; position: relative; white-space: nowrap; }
.m1 { margin-top: 1px; }
.tri { width: 0; height: 0; border-left: 5.5px solid transparent; border-right: 5.5px solid transparent; border-top: 10px solid #222; margin: 0 7px 0 3px; }
.dots { position: absolute; right: 0; top: 50%; width: 14px; height: 7px; margin-top: -3px; background: radial-gradient(circle, #d4d4d4 1px, transparent 1.2px) 0 0 / 3.5px 3.5px; }
.p-head .dots { background-image: radial-gradient(circle, #a6a6a6 1px, transparent 1.2px); }
.lab { height: 28px; line-height: 28px; font-size: 14.6px; color: #1c1c1c; padding-left: 10px; white-space: nowrap; }
.lab.dim { color: #565656; }
.fl-row { display: flex; gap: 12px; }
.grp { width: 232px; height: 84px; border: 2px solid #3d3d3d; border-radius: 12px; overflow: hidden; display: flex; flex-direction: column; background: #3d3d3d; gap: 2px; }
.grp.wide { width: 302px; }
.grp.one { height: 28px; border-radius: 14px; }
.grp.two { height: 56px; }
.num { flex: 1; display: flex; align-items: center; justify-content: space-between; background: linear-gradient(#a6a6a6, #b6b6b6); padding: 1px 6px 0 7px; font-size: 15.4px; color: #111; }
.grp:not(.one):not(.two) .num:nth-child(2) { flex: 0 0 27px; }
.num::before { content: ""; border: 5px solid transparent; border-right: 7px solid #8a8a8a; border-left: 0; }
.num::after { content: ""; border: 5px solid transparent; border-left: 7px solid #8a8a8a; border-right: 0; }
.num span:first-child { flex: 1; padding-left: 7px; }
.num span:last-child { padding-right: 10px; }
.locks { width: 58px; height: 84px; border: 2px solid #3f3f3f; border-radius: 9px; overflow: hidden; display: flex; flex-direction: column; background: #3f3f3f; gap: 2px; }
.locks span { flex: 1; background: linear-gradient(#808080, #747474); display: flex; align-items: center; justify-content: center; }
.locks svg { width: 22px; height: 20px; margin-right: -1px; }
.drop-s { width: 302px; height: 28px; border-radius: 9px; justify-content: space-between; padding: 0 4px 0 10px; font-size: 15px; }
.chk { width: 20px; height: 19px; border: 2px solid #333; border-radius: 5px; background: #4c4c4c; margin: -4px 2px 0 4px; }
.chk svg { display: block; width: 20px; height: 20px; margin: -4px 0 0 1px; }
.tabs2 { width: 302px; height: 27px; display: flex; border: 2px solid #333; border-radius: 9px; overflow: hidden; font-size: 15px; color: #fff; }
.tabs2 span { flex: 1; display: flex; align-items: center; justify-content: center; background: linear-gradient(#4c4c4c, #333); }
.tabs2 .on { flex: 0 0 149px; background: linear-gradient(#5680c2, #4a6fae); color: #111; border-right: 2px solid #333; }
.newrow { width: 302px; height: 27px; display: flex; border: 2px solid #3d3d3d; border-radius: 9px; overflow: hidden; }
.pen { width: 44px; border: 0; border-radius: 0; justify-content: center; gap: 2px; background: linear-gradient(#4c4c4c, #333); }
.i-pen { width: 24px; height: 18px; }
.newbtn { flex: 1; background: linear-gradient(#a8a8a8, #8c8c8c); display: flex; align-items: center; padding-left: 6px; border-left: 2px solid #3d3d3d; }
.i-plus { width: 18px; height: 18px; }
.newbtn b { font-weight: 400; margin-left: 100px; }
.btn { width: 302px; height: 27px; border: 2px solid #3d3d3d; border-radius: 9px; background: linear-gradient(#a8a8a8, #8c8c8c); text-align: center; line-height: 25px; font-size: 15px; color: #111; }
.np-sep { border-bottom: 1px solid #585858; }
.sep-11 { margin-top: 11px; } .sep-12 { margin-top: 12px; } .sep-13 { margin-top: 13px; } .sep-14 { margin-top: 14px; }
.npanel .np-sep { width: 318px; margin-left: -1px; }
.objf { width: 302px; height: 27px; border: 2px solid #3d3d3d; border-radius: 9px; background: linear-gradient(#a6a6a6, #b6b6b6); display: flex; align-items: center; padding: 0 4px 0 7px; justify-content: space-between; }
.i-cube { width: 20px; height: 20px; }
.i-drop { width: 20px; height: 20px; }
.objf.off { opacity: 1; background: #8a8a8a; color: #666; border-color: #606060; }
.objf.off svg { opacity: .55; }
.objf.off span { flex: 1; padding-left: 18px; }
.i-x { width: 15px; height: 15px; }
.chkrow { height: 28px; display: flex; align-items: center; font-size: 15px; color: #1c1c1c; padding-left: 3px; }
.box { width: 20px; height: 20px; border: 2px solid #3a3a3a; border-radius: 6px; background: linear-gradient(#4a4a4a, #565656); margin-right: 11px; }
.itemrow { display: flex; align-items: center; height: 27px; padding-left: 6px; }
.itemf { margin-left: 15px; width: 263px; height: 27px; border: 2px solid #3d3d3d; border-radius: 9px; background: linear-gradient(#a6a6a6, #b6b6b6); line-height: 24px; padding-left: 10px; font-size: 15px; }
.itemrow .i-cube { width: 18px; height: 18px; flex: none; margin-left: 0; }

/* timeline */
.timeline { height: 60px; flex: none; position: relative; background:
  linear-gradient(90deg, rgba(0,0,0,.22) 1.5px, transparent 1.5px) 60px 0 / 73px 100%,
  linear-gradient(90deg, rgba(0,0,0,.1) 1px, transparent 1px) 23.5px 0 / 73px 100%,
  linear-gradient(90deg, #424242 429px, #727272 429px, #727272 2253px, #424242 2253px); }
.playhead { position: absolute; left: 429px; top: 0; bottom: 0; width: 5px; background: #57b030; }
.ruler { height: 27px; margin: 0 12px 0 10px; padding: 3px 0 0 20.5px; flex: none; display: flex; align-items: center; border: 2px solid #434343; border-radius: 14px; background: linear-gradient(#8f8f8f, #6a6a6a); white-space: nowrap; width: 2476px; position: relative; }
.ruler::before { content: ""; position: absolute; left: 1px; top: 1px; width: 16px; height: 21px; border-radius: 50%; background: #6c6c6c; }
.ruler span { flex: 0 0 73px; text-align: center; line-height: 22px; }
.timehead { margin-top: 7px; border-top: 2px solid #7d7d7d; height: 53px; background: #6e6e6e; }
.frames { display: flex; flex: none; height: 40px; }
.fnum { height: 40px; display: flex; align-items: center; background: linear-gradient(#a2a2a2, #b0b0b0); border: 2px solid #3f3f3f; padding: 3px 10px 0; justify-content: space-between; }
.fnum::before { content: ""; border: 7px solid transparent; border-right: 8px solid #8a8a8a; border-left: 0; margin-top: -3px; }
.fnum::after { content: ""; border: 7px solid transparent; border-left: 8px solid #8a8a8a; border-right: 0; margin-top: -3px; }
.fnum span:first-child { flex: 1; padding-left: 10px; }
.fnum span:last-child { padding-right: 12px; }
.w236 { width: 236px; border-radius: 20px 0 0 20px; }
.w225 { width: 225px; border-radius: 0 20px 20px 0; border-left: 0; }
.w177 { width: 177px; border-radius: 20px; }
.keyfld { width: 268px; padding: 0 0 0 4px; border-right: 2px solid #3a3a3a; }

/* outliner */
.outliner { height: 259px; flex: none; position: relative; background: #737373; overflow: hidden; }
.ol-head { height: 52px; background: #737373; border-bottom: 1px solid #666; overflow: hidden; }
.allsc { position: absolute; left: 294px; top: 7px; width: 130px; height: 38px; padding-left: 14px; }
.tree { position: relative; height: 172px; overflow: hidden; }
.row { height: 40px; display: flex; align-items: center; background: #737373; position: relative; }
.row:nth-child(odd) { background: #6f6f6f; }
.row.sel { background: linear-gradient(90deg, #7d868c 226px, #737373 226px); }
.row.partial { align-items: flex-start; padding-top: 1px; }
.exp { position: absolute; width: 18px; height: 18px; border-radius: 50%; border: 2px solid #111; background: #ddd; }
.exp::after { content: ""; position: absolute; left: 2px; right: 2px; top: 5px; height: 4px; background: #111; }
.exp:not(.minus)::before { content: ""; position: absolute; left: 5px; top: 2px; width: 4px; height: 10px; background: #111; }
.ex0 { left: 11px; top: 12px; } .ex1 { left: 51px; top: 12px; }
.i-tree { width: 32px; height: 32px; }
.i-tree.l1, .h-world { margin-left: 85px; }
.h-scene { margin-left: 43px; }
.halo { width: 36px; height: 36px; border-radius: 50%; display: flex; align-items: center; justify-content: center; flex: none; }
.h-scene { background: #9aa2a6; }
.h-world { background: #9ea0ac; }
.nm { margin-left: 10px; white-space: nowrap; width: 100px; overflow: hidden; padding-top: 4px; }
.nm0 { margin-left: 7px; }
.rest { position: absolute; left: 233px; top: 0; bottom: 0; display: flex; align-items: center; }
.partial .rest { align-items: flex-start; }
.r-eye { width: 28px; height: 16px; }
.r-ptr { width: 16px; height: 24px; margin-left: 20px; }
.r-ptr.r-first { margin-left: 48px; }
.r-cam { width: 28px; height: 24px; margin-left: 16px; }
.col { position: absolute; top: 0; bottom: 0; width: 2px; background: #666; }
.c1 { left: 226px; } .c2 { left: 266px; } .c3 { left: 306px; }
.conn { position: absolute; left: 59px; top: 40px; bottom: 0; width: 2px; background: #3a3a3a; }
.hscroll { position: absolute; left: 9px; top: 226px; width: 328px; height: 24px; background: #5e5e5e; border-radius: 12px; overflow: hidden; }
.hscroll b { display: block; width: 225px; height: 100%; background: linear-gradient(#8a8a8a, #727272); border-radius: 12px; }
.rule3 { height: 3px; background: #000; flex: none; }

/* properties */
.props { flex: 1; position: relative; background: #727272; padding-left: 16px; overflow: hidden; }
.pr-head { height: 52px; margin-left: -16px; background: #737373; border-bottom: 2px solid #666; overflow: hidden; }
.ptabs { display: flex; margin-left: 16px; flex: none; height: 38px; border: 2px solid #2f2f2f; border-radius: 10px 0 0 10px; background: #2f2f2f; gap: 2px; }
.ptabs span { width: 38px; background: linear-gradient(#4a4a4a, #353535); display: flex; align-items: center; justify-content: center; }
.ptabs .on { background: #5680c2; }
.ptabs svg { width: 30px; height: 28px; }
.crumbs { height: 30px; margin-top: 20px; display: flex; align-items: center; }
.c-pin { width: 30px; height: 30px; margin-left: 5px; }
.c-scene { width: 30px; height: 28px; margin-left: 10px; }
.c-arrow { width: 0; height: 0; border: 6px solid transparent; border-left: 7px solid #3a3a3a; border-right: 0; margin-left: 18px; }
.c-cube { width: 26px; height: 26px; margin-left: 30px; }
.crumbs span { margin-left: 15px; white-space: nowrap; padding-top: 2px; }
.namefld { width: 314px; height: 39px; margin-top: 37px; display: flex; border: 2px solid #3d3d3d; border-radius: 10px; overflow: hidden; background: linear-gradient(#a8a8a8, #b4b4b4); align-items: center; }
.namefld .seg { height: 39px; }
.nmval { padding: 2px 0 0 15px; }
.p-sep { border-bottom: 1px solid #585858; margin-left: -9px; width: 336px; }
.sp16 { margin-top: 16px; } .sp17 { margin-top: 17px; }
.p-head { height: 43px; display: flex; align-items: center; font-size: 22px; color: #1c1c1c; position: relative; width: 309px; padding-top: 1px; }
.tri.big { border-left-width: 7px; border-right-width: 7px; border-top-width: 13px; margin: -1px 13px 0 4px; }
.tri.big.right { border-left: 14px solid #2a2a2a; border-right: 0; border-top: 7px solid transparent; border-bottom: 7px solid transparent; margin: -1px 13px 0 4px; }
.tri3 { display: flex; gap: 17px; }
.t3col { width: 93px; }
.plab { height: 30px; line-height: 31px; padding-left: 16px; white-space: nowrap; color: #1a1a1a; }
.pgrp { margin-top: 4px; height: 118px; border: 2px solid #3d3d3d; border-radius: 16px; overflow: hidden; background: #3d3d3d; display: flex; flex-direction: column; gap: 2px; }
.pnum { flex: 1; display: flex; align-items: center; justify-content: space-between; padding: 2px 10px 0; background: linear-gradient(#a4a4a4, #b4b4b4); color: #111; }
.pnum::before { content: ""; border: 6px solid transparent; border-right: 8px solid #8a8a8a; border-left: 0; }
.pnum::after { content: ""; border: 6px solid transparent; border-left: 8px solid #8a8a8a; border-right: 0; }
.rotrow { display: flex; margin-top: 12px; height: 38px; align-items: center; justify-content: space-between; width: 314px; }
.psel { width: 199px; height: 38px; justify-content: space-between; padding: 0 6px 0 16px; }
.rel { display: flex; gap: 17px; }
.relcol { width: 148px; }
.rc2 { width: 149px; }
.relgrids { display: flex; gap: 10px; margin-top: 8px; }
.pass { margin-top: 22px; width: 148px; height: 39px; border: 2px solid #3d3d3d; border-radius: 20px; background: linear-gradient(#a4a4a4, #b4b4b4); display: flex; align-items: center; justify-content: space-between; padding: 2px 10px 0; }
.pass::before { content: ""; border: 6px solid transparent; border-right: 8px solid #8a8a8a; border-left: 0; }
.pass::after { content: ""; border: 6px solid transparent; border-left: 8px solid #8a8a8a; border-right: 0; }
.parent { margin-top: 8px; height: 38px; border: 2px solid #3d3d3d; border-radius: 10px; background: linear-gradient(#a8a8a8, #b8b8b8); display: flex; align-items: center; justify-content: space-between; padding: 0 6px 0 12px; }
.objsel { margin-top: 6px; height: 38px; border: 2px solid #555; border-radius: 10px; background: #606060; color: #9a9a9a; display: flex; align-items: center; justify-content: space-between; padding: 2px 6px 0 16px; }
.addgrp { margin-top: 17px; width: 314px; height: 38px; border: 2px solid #3d3d3d; border-radius: 10px; display: flex; background: linear-gradient(#adadad, #8e8e8e); overflow: hidden; }
.addgrp span { flex: 1; text-align: center; line-height: 36px; color: #111; }
.addgrp b { width: 40px; border-left: 2px solid #3d3d3d; display: flex; align-items: center; justify-content: center; background: #8c8c8c; }
.disp { margin-top: 15px; display: grid; grid-template-columns: 165px 149px; width: 314px; }
.dr { height: 44px; display: flex; align-items: center; color: #1a1a1a; padding-left: 6px; line-height: 30px; padding-top: 1px; }
.box2 { width: 28px; height: 28px; border: 2px solid #3a3a3a; border-radius: 8px; background: linear-gradient(#474747, #585858); margin-right: 17px; flex: none; }
.bo { margin-left: 26px; width: 67px; height: 38px; border: 2px solid #555; border-radius: 10px; background: #606060; color: #9a9a9a; display: flex; align-items: center; justify-content: space-between; padding: 2px 4px 0 16px; flex: none; }
.maxrow { display: grid; grid-template-columns: 165px 149px; width: 314px; margin-top: 13px; }
.ctlrow { display: flex; justify-content: space-between; width: 314px; margin-top: 9px; }
.psel2 { width: 148px; height: 38px; justify-content: space-between; padding: 0 6px 0 14px; }
.swatch { width: 149px; height: 38px; background: #fff; border: 2px solid #3d3d3d; border-radius: 10px; }
```
